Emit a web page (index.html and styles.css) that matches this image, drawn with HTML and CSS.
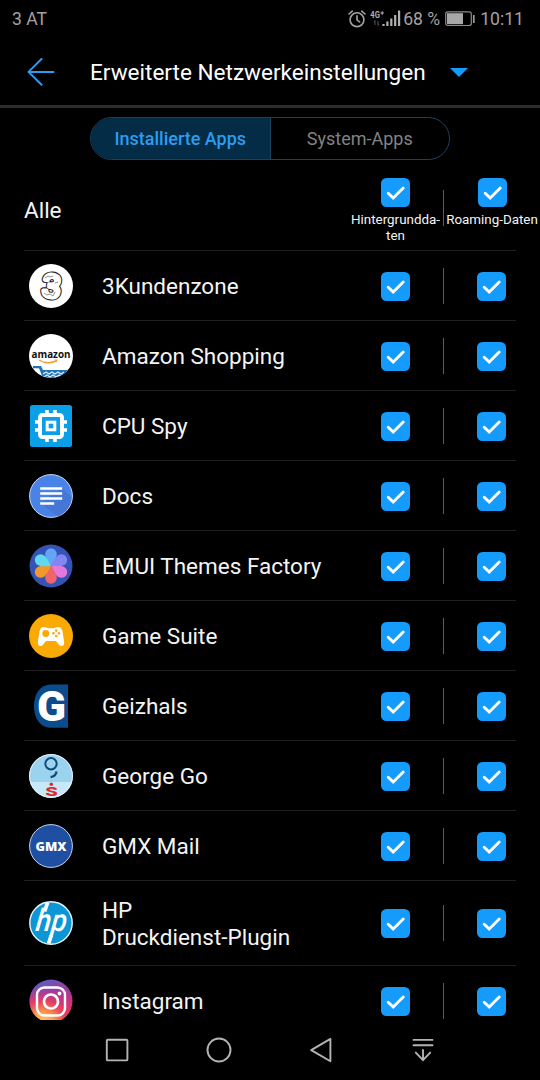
FILE: index.html
```
<!DOCTYPE html>
<html lang="de">
<head>
    <meta charset="UTF-8">
    <meta name="viewport" content="width=device-width, initial-scale=1.0">
    <title>Erweiterte Netzwerkeinstellungen</title>
    <link rel="stylesheet" href="styles.css">
</head>
<body>
    <svg class="defs" width="0" height="0">
        <symbol id="check" viewBox="0 0 29 29">
            <rect width="29" height="29" rx="5.5" fill="#149bfb"/>
            <path d="M7.2 15.2l5 4.8 10-10" fill="none" stroke="#fff" stroke-width="2.9" stroke-linecap="round"/>
        </symbol>
        <symbol id="petal" viewBox="0 0 44 44">
            <path d="M22 22C18 16 16.2 13 16.2 10a5.8 5.8 0 0 1 11.6 0C27.8 13 26 16 22 22z"/>
        </symbol>
    </svg>

    <div class="status-bar">
        <span class="carrier">3 AT</span>
        <svg class="alarm" width="18" height="18" viewBox="0 0 18 18" fill="none" stroke="#a2a2a2" stroke-width="1.6" stroke-linecap="round">
            <circle cx="9" cy="9.7" r="6.9"/>
            <path d="M9 5.8v4l2.6 2.2M1 4l3.3-2.8M17 4l-3.3-2.8"/>
        </svg>
        <svg class="signal" width="31" height="18" viewBox="0 0 31 18">
            <text x="0.3" y="7.5" class="net-type" textLength="9.5" lengthAdjust="spacingAndGlyphs">4G</text>
            <path d="M10.5 3h3.4M12.2 1.3v3.4" stroke="#b0b0b0" stroke-width="1.1"/>
            <path d="M5 15v-4l-1 1.2M8 11v4l1-1.2" fill="none" stroke="#4c4c4c" stroke-width="1.1"/>
            <path d="M13.5 16v-2M17.4 16v-4.5M21.3 16v-7.5M25.2 16v-11M29.1 16v-15.5" stroke="#b0b0b0" stroke-width="2.2"/>
        </svg>
        <span class="percent">68 %</span>
        <svg class="battery" width="30" height="16" viewBox="0 0 30 16">
            <rect x=".7" y=".9" width="25.6" height="13.6" rx="2" fill="none" stroke="#8c8c8c" stroke-width="1.2"/>
            <rect x="2" y="2.2" width="16" height="11" fill="#a8a8a8"/>
            <rect x="28" y="4" width="1.6" height="8" fill="#a0a0a0"/>
        </svg>
        <span class="clock">10:11</span>
    </div>

    <div class="title-bar">
        <svg class="back" width="28" height="28" viewBox="0 0 28 28" fill="none" stroke="#2f9bea" stroke-width="2" stroke-linecap="round" stroke-linejoin="round">
            <path d="M14.5 1L1.5 13.9l13 12.9M1.5 13.9h25"/>
        </svg>
        <h1>Erweiterte Netzwerkeinstellungen</h1>
        <svg class="arrow" width="18" height="9" viewBox="0 0 18 9"><path d="M0 0h18l-9 9z" fill="#149bfb"/></svg>
    </div>

    <div class="tabs">
        <div class="tab active">Installierte Apps</div>
        <div class="tab">System-Apps</div>
    </div>

    <div class="all-row">
        <span class="all-name">Alle</span>
        <div class="all-col">
            <svg class="check"><use href="#check"/></svg>
            <span>Hintergrundda-<br>ten</span>
        </div>
        <i class="sep"></i>
        <div class="all-col">
            <svg class="check"><use href="#check"/></svg>
            <span>Roaming-Daten</span>
        </div>
    </div>

    <div class="list">
        <div class="row">
            <svg class="icon" viewBox="0 0 44 44">
                <circle cx="22" cy="22" r="22" fill="#fff"/>
                <g class="three" transform="rotate(6 22 22)">
                    <text x="22.5" y="33" stroke="#222" stroke-width="6.4">3</text>
                    <text x="22.5" y="33" stroke="#fff" stroke-width="4.2">3</text>
                </g>
                <path d="M16 14l3-2 2 1 3-1M26 19l3-1M15 29l3 2 3-1 3 2 2-4" fill="none" stroke="#777" stroke-width=".8"/>
            </svg>
            <span class="name">3Kundenzone</span>
            <svg class="check"><use href="#check"/></svg><i class="sep"></i><svg class="check"><use href="#check"/></svg>
        </div>
        <div class="row">
            <svg class="icon" viewBox="0 0 44 44">
                <clipPath id="round"><circle cx="22" cy="22" r="22"/></clipPath>
                <g clip-path="url(#round)">
                    <rect width="44" height="44" fill="#fff"/>
                    <path d="M4 32h8l2 4h30v2.2H39l2 6H14l-4-10H4z" fill="#1f74b8"/>
                    <path d="M14 40l3-2 3 2 3-2 3 2 3-2 3 2 3-2M15 43l3-2 3 2 3-2 3 2 3-2 3 2" fill="none" stroke="#d8ecfa" stroke-width="1.3"/>
                </g>
                <text x="2.5" y="24" class="amazon" textLength="39" lengthAdjust="spacingAndGlyphs">amazon</text>
                <path d="M10 26q8 5 17 1" fill="none" stroke="#f0a030" stroke-width="1.4"/>
                <path d="M25.5 25.6l3.2-.2-1.2 3z" fill="#f0a030"/>
            </svg>
            <span class="name">Amazon Shopping</span>
            <svg class="check"><use href="#check"/></svg><i class="sep"></i><svg class="check"><use href="#check"/></svg>
        </div>
        <div class="row">
            <svg class="icon" viewBox="0 0 44 44">
                <rect x="1" y="1" width="42" height="42" rx="2.5" fill="#0a9fe6"/>
                <g fill="none" stroke="#fff">
                    <rect x="11" y="11" width="22" height="22" rx="2.5" stroke-width="4"/>
                    <rect x="18.2" y="18.2" width="7.6" height="7.6" stroke-width="3"/>
                    <path d="M18 6v4M26 6v4M18 34v4M26 34v4M6 18h4M6 26h4M34 18h4M34 26h4" stroke-width="3.6"/>
                </g>
            </svg>
            <span class="name">CPU Spy</span>
            <svg class="check"><use href="#check"/></svg><i class="sep"></i><svg class="check"><use href="#check"/></svg>
        </div>
        <div class="row">
            <svg class="icon" viewBox="0 0 44 44">
                <circle cx="22" cy="22" r="21.4" fill="#4a83e8" stroke="#c9d8f4"/>
                <path d="M33 14l9.5 9q-1 14-14 19.5L11.5 29z" fill="#4477d6"/>
                <path d="M11.2 14.4h22M11.2 19.4h22M11.2 24.4h22M11.2 29.6h14" stroke="#fff" stroke-width="2.5"/>
            </svg>
            <span class="name">Docs</span>
            <svg class="check"><use href="#check"/></svg><i class="sep"></i><svg class="check"><use href="#check"/></svg>
        </div>
        <div class="row">
            <svg class="icon" viewBox="0 0 44 44">
                <circle cx="22" cy="22" r="21.5" fill="#3553b5"/>
                <use href="#petal" width="44" height="44" fill="#63a5f6"/>
                <use href="#petal" width="44" height="44" fill="#8585f2" transform="rotate(60 22 22)"/>
                <use href="#petal" width="44" height="44" fill="#e478dc" transform="rotate(120 22 22)"/>
                <use href="#petal" width="44" height="44" fill="#f0646c" transform="rotate(180 22 22)"/>
                <use href="#petal" width="44" height="44" fill="#f09a2c" transform="rotate(240 22 22)"/>
                <use href="#petal" width="44" height="44" fill="#62d8ee" transform="rotate(300 22 22)"/>
            </svg>
            <span class="name">EMUI Themes Factory</span>
            <svg class="check"><use href="#check"/></svg><i class="sep"></i><svg class="check"><use href="#check"/></svg>
        </div>
        <div class="row">
            <svg class="icon" viewBox="0 0 44 44">
                <circle cx="22" cy="22" r="22" fill="#fba905"/>
                <path d="M15 13c2 0 3 1.2 4 1.2h6c1 0 2-1.2 4-1.2 3 0 4 2 4.6 5l1.4 9c.5 3-.4 5-2.6 5-3 0-4-5-6.4-5h-8c-2.4 0-3.4 5-6.4 5-2.2 0-3.1-2-2.6-5l1.4-9c.6-3 1.6-5 4.6-5z" fill="#fff"/>
                <circle cx="16.7" cy="19.5" r="3.4" fill="#fba905"/>
                <g fill="#fba905">
                    <circle cx="27.2" cy="16.6" r="1.3"/><circle cx="27.2" cy="22" r="1.3"/>
                    <circle cx="24.5" cy="19.3" r="1.3"/><circle cx="29.9" cy="19.3" r="1.3"/>
                </g>
            </svg>
            <span class="name">Game Suite</span>
            <svg class="check"><use href="#check"/></svg><i class="sep"></i><svg class="check"><use href="#check"/></svg>
        </div>
        <div class="row">
            <svg class="icon" viewBox="0 0 44 44">
                <path d="M39 .5v43.3H22C11 43.8 5 34 5 22S11 .5 22 .5z" fill="#0d4c8c"/>
                <text x="8" y="37" class="geiz" textLength="29" lengthAdjust="spacingAndGlyphs">G</text>
            </svg>
            <span class="name">Geizhals</span>
            <svg class="check"><use href="#check"/></svg><i class="sep"></i><svg class="check"><use href="#check"/></svg>
        </div>
        <div class="row">
            <svg class="icon" viewBox="0 0 44 44">
                <g clip-path="url(#round)">
                    <rect width="44" height="28" fill="#9bd2ee"/>
                    <rect y="28" width="44" height="16" fill="#c6e8f8"/>
                </g>
                <circle cx="22" cy="22" r="21.4" fill="none" stroke="#e6f3fa"/>
                <circle cx="22" cy="9.8" r="5.7" fill="none" stroke="#0f4a78" stroke-width="2"/>
                <path d="M27.6 17.5q-.8 5-6 5.6" fill="none" stroke="#0f4a78" stroke-width="2.2"/>
                <circle cx="22.3" cy="30.3" r="1.8" fill="#e02b2b"/>
                <text x="16.2" y="42" class="spk" textLength="12.5" lengthAdjust="spacingAndGlyphs">S</text>
            </svg>
            <span class="name">George Go</span>
            <svg class="check"><use href="#check"/></svg><i class="sep"></i><svg class="check"><use href="#check"/></svg>
        </div>
        <div class="row">
            <svg class="icon" viewBox="0 0 44 44">
                <circle cx="22" cy="22" r="21.4" fill="#1f4fa3" stroke="#c4d1ea"/>
                <text x="6.5" y="26.6" class="gmx" textLength="31" lengthAdjust="spacingAndGlyphs">GMX</text>
            </svg>
            <span class="name">GMX Mail</span>
            <svg class="check"><use href="#check"/></svg><i class="sep"></i><svg class="check"><use href="#check"/></svg>
        </div>
        <div class="row tall">
            <svg class="icon" viewBox="0 0 44 44">
                <circle cx="22" cy="22" r="21.2" fill="#0c96d6" stroke="#e4f3fb" stroke-width="1.4"/>
                <text x="6" y="0" class="hp" textLength="31" lengthAdjust="spacingAndGlyphs" transform="translate(0 30) skewX(-7)">hp</text>
                <path d="M18.6 1.5l-3 8.8M22.2 34.5l-2.6 8" stroke="#fff" stroke-width="3.8"/>
            </svg>
            <span class="name">HP<br>Druckdienst-Plugin</span>
            <svg class="check"><use href="#check"/></svg><i class="sep"></i><svg class="check"><use href="#check"/></svg>
        </div>
        <div class="row">
            <svg class="icon" viewBox="0 0 44 44">
                <linearGradient id="insta-top" x1=".3" y1="0" x2=".6" y2="1">
                    <stop offset="0" stop-color="#5960c0"/>
                    <stop offset=".35" stop-color="#a238a4"/>
                    <stop offset=".8" stop-color="#df3268"/>
                </linearGradient>
                <radialGradient id="insta-glow" cx=".3" cy="1.05" r=".85">
                    <stop offset="0" stop-color="#ffd674"/>
                    <stop offset=".35" stop-color="#fb9a4a"/>
                    <stop offset=".65" stop-color="#ee4558" stop-opacity=".8"/>
                    <stop offset="1" stop-color="#d0327c" stop-opacity="0"/>
                </radialGradient>
                <circle cx="22" cy="22" r="21.5" fill="url(#insta-top)"/>
                <circle cx="22" cy="22" r="21.5" fill="url(#insta-glow)"/>
                <rect x="8" y="8.5" width="28" height="28" rx="7.5" fill="none" stroke="#fff" stroke-width="2.4"/>
                <circle cx="22" cy="22.5" r="7" fill="none" stroke="#fff" stroke-width="2.7"/>
                <circle cx="30.5" cy="14.5" r="1.9" fill="#fff"/>
            </svg>
            <span class="name">Instagram</span>
            <svg class="check"><use href="#check"/></svg><i class="sep"></i><svg class="check"><use href="#check"/></svg>
        </div>
    </div>

    <div class="nav-bar">
        <svg viewBox="0 0 26 26"><rect x="2.8" y="2.8" width="20.6" height="20.6" rx="1"/></svg>
        <svg viewBox="0 0 26 26"><circle cx="13" cy="13" r="11.5"/></svg>
        <svg viewBox="0 0 26 26"><path d="M22.4 1.9v22.4L3.2 13.1z"/></svg>
        <svg viewBox="0 0 26 26"><path d="M3.5 2.9h19M3.5 8.3h19M13 13v10.2M5.8 15.6l7.2 7.6 7.2-7.6"/></svg>
    </div>
</body>
</html>
```
FILE: styles.css
```
* { box-sizing: border-box; }
body {
    margin: 0;
    width: 540px;
    height: 1080px;
    overflow: hidden;
    display: flex;
    flex-direction: column;
    background: #000;
    color: #f4f4f4;
    font-family: Roboto, "Liberation Sans", sans-serif;
}
svg { display: block; flex: none; }
.defs { position: absolute; }

.status-bar {
    height: 37px;
    padding: 1px 16px 0 12px;
    display: flex;
    align-items: center;
    font-size: 17.6px;
    color: #a2a2a2;
}
.carrier { flex: 1; }
.signal { margin: 0 2px 0 4px; }
.net-type { font-size: 8.5px; font-weight: 700; fill: #b0b0b0; }
.percent { width: 37px; white-space: nowrap; }
.battery { margin: 0 5px; }

.title-bar {
    height: 71px;
    display: flex;
    align-items: center;
    padding: 2px 0 0 27px;
    border-bottom: 3px solid #2d2d2d;
}
.title-bar h1 { margin: 1px 24px 0 35px; font-size: 22.55px; font-weight: 400; color: #fff; }

.tabs {
    display: flex;
    width: 360px;
    height: 43px;
    margin: 9px 0 0 90px;
    border: 1px solid #1d4260;
    border-radius: 22px;
    overflow: hidden;
}
.tab {
    flex: 1;
    display: flex;
    align-items: center;
    justify-content: center;
    font-size: 18px;
    color: #828282;
}
.tab.active { background: #042c47; color: #2b9cf0; font-weight: 500; border-right: 1px solid #1d4260; }

.all-row {
    height: 90px;
    display: flex;
    align-items: flex-start;
}
.all-name { width: 324px; padding: 37px 0 0 24px; font-size: 22.5px; line-height: 27px; }
.all-col {
    width: 95px;
    padding-top: 17.5px;
    display: flex;
    flex-direction: column;
    align-items: center;
    font-size: 13.4px;
    line-height: 16px;
    text-align: center;
    white-space: nowrap;
}
.all-col:nth-child(2) { margin-left: 24px; }
.all-col:last-child { width: 96px; }
.all-col span { margin-top: 5px; }
.all-row .sep { margin: 30px 0 0; }

.check { width: 29px; height: 29px; }
.sep { width: 1px; height: 36px; background: #5c5c5c; flex: none; }

.list { flex: 1; min-height: 0; overflow: hidden; padding: 0 24px; }
.row {
    height: 70px;
    display: flex;
    align-items: center;
    padding: 0 10px 0 5px;
    border-top: 1px solid #202020;
}
.row.tall { height: 85px; }
.row .check { margin-top: 1px; }
.row .sep { margin: 0 33.5px 0 33px; }
.icon { width: 44px; height: 44px; overflow: visible; }
.name { flex: 1; margin: 2px 0 0 29px; font-size: 22.5px; line-height: 27px; }

.three text { font: 400 32px "Liberation Sans", sans-serif; fill: #fff; text-anchor: middle; stroke-linejoin: round; }
.amazon { font: 700 11px "Open Sans", sans-serif; fill: #111; }
.geiz { font: 900 42px Roboto, sans-serif; fill: #fff; }
.spk { font: 900 13px Roboto, sans-serif; fill: #e02b2b; }
.gmx { font: 800 12px "Open Sans", sans-serif; fill: #fff; }
.hp { font: italic 500 31px Roboto, sans-serif; fill: #fff; }

.nav-bar {
    height: 60px;
    display: flex;
    padding: 17px 0 0 104px;
    gap: 76px;
}
.nav-bar svg { width: 26px; height: 26px; fill: none; stroke: #b4b4b4; stroke-width: 1.9; stroke-linejoin: round; stroke-linecap: round; }
```
